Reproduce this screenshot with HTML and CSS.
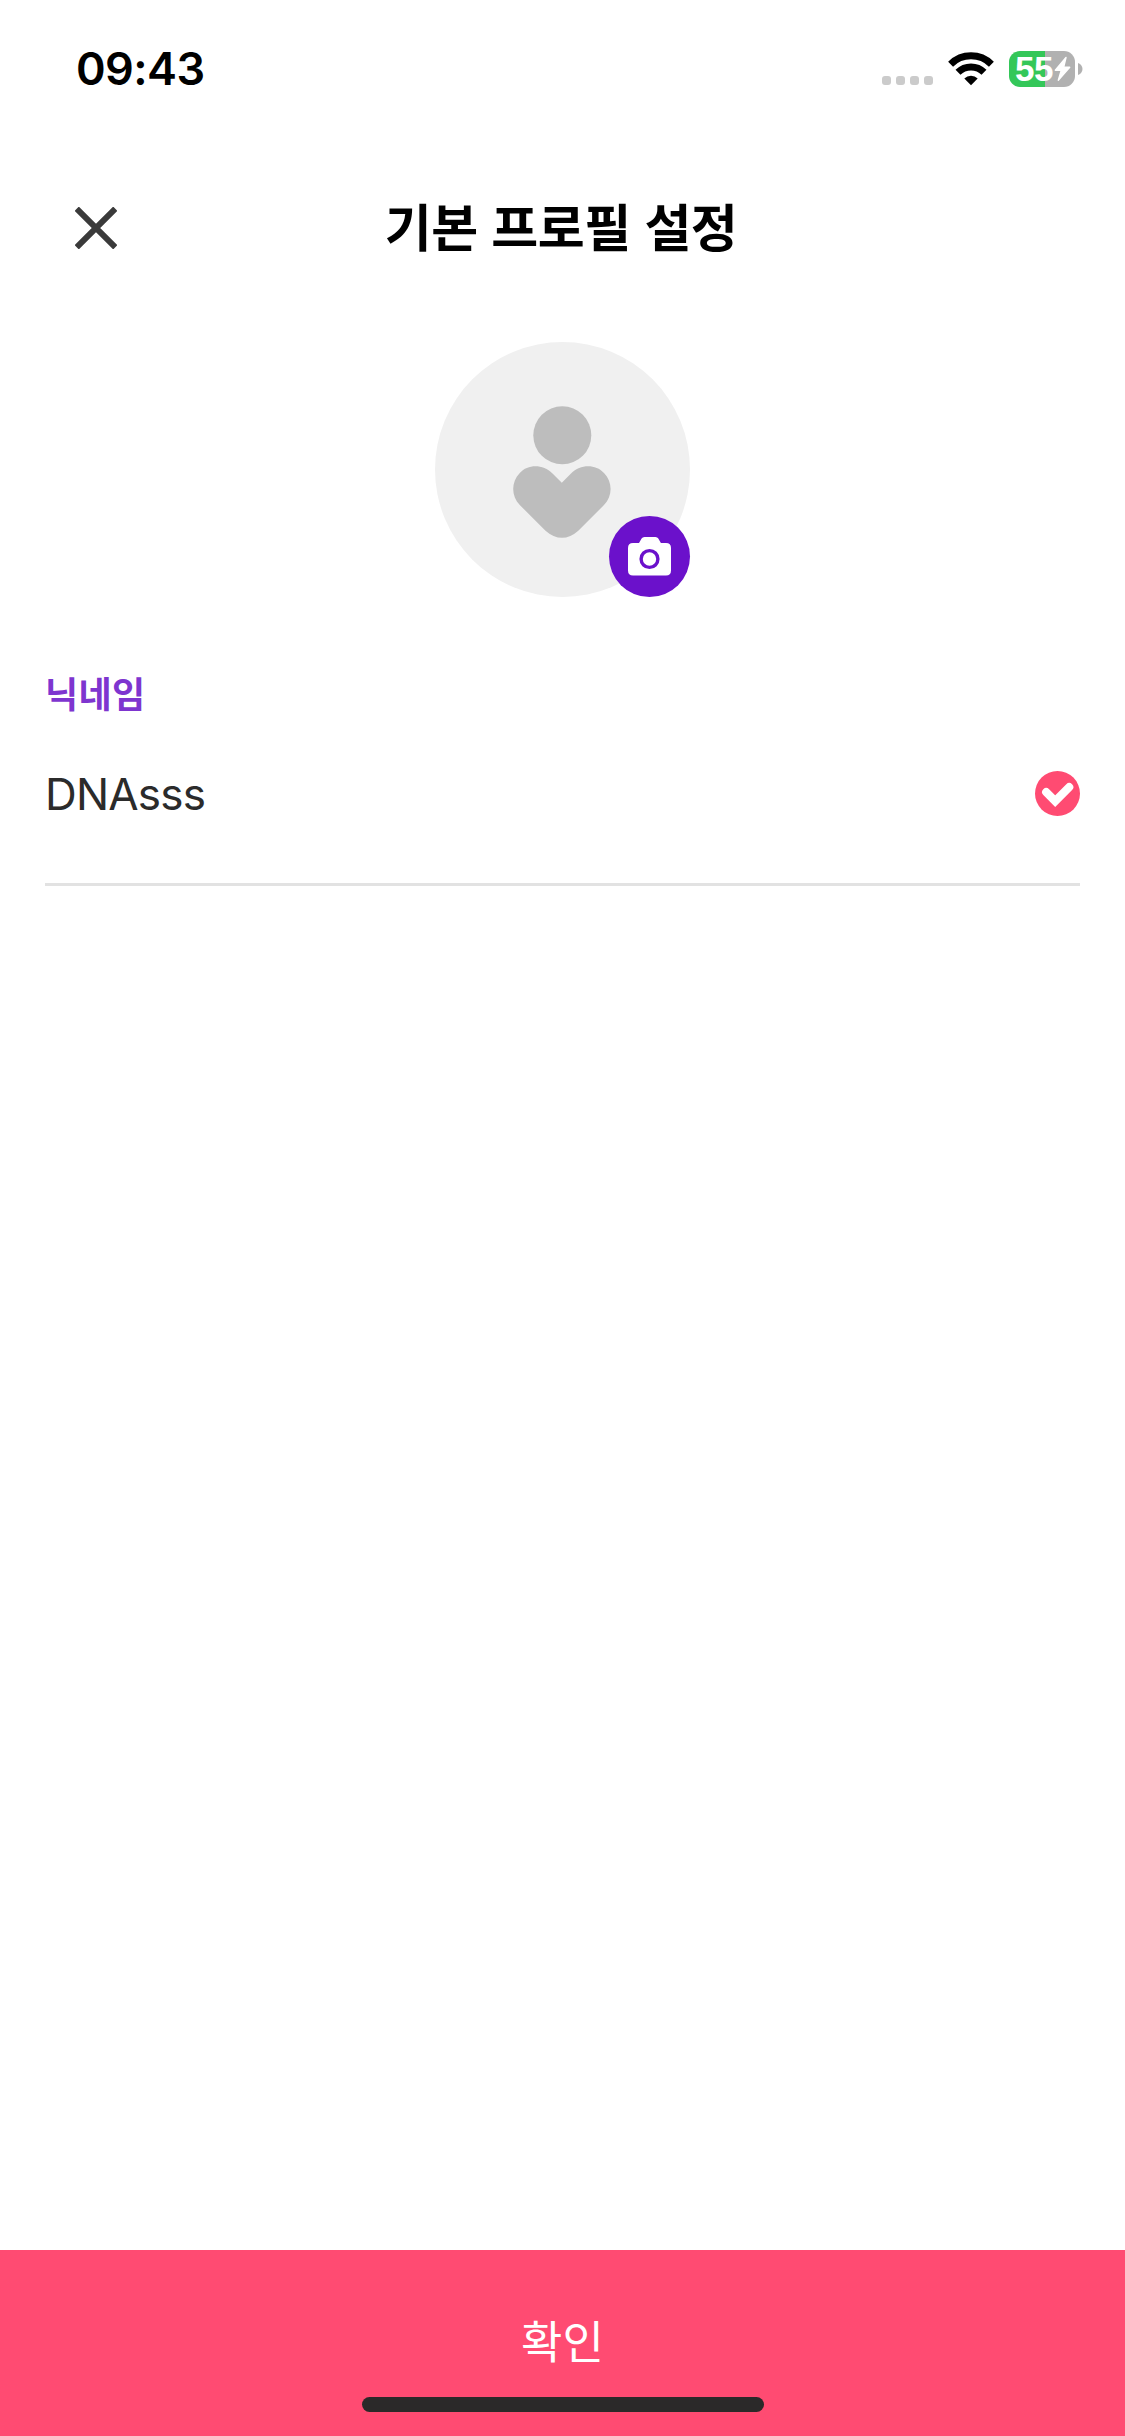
FILE: index.html
```html
<!DOCTYPE html>
<html lang="ko">
<head>
<meta charset="utf-8">
<title>기본 프로필 설정</title>
<link rel="stylesheet" href="styles.css">
</head>
<body>
<main class="screen">
  <div class="status">
    <span class="time">09:43</span>
    <div class="status-icons">
      <svg class="dots" width="51" height="9" viewBox="0 0 51 9"><g fill="#cbcbcb"><rect width="9" height="9" rx="3"/><rect x="14" width="9" height="9" rx="3"/><rect x="28" width="9" height="9" rx="3"/><rect x="42" width="9" height="9" rx="3"/></g></svg>
      <svg class="wifi" width="46" height="34" viewBox="0 0 46 34"><g fill="none" stroke="#000" stroke-width="7"><path d="M2.600 12.200a29 29 0 0 1 40.800 0"/><path d="M10 20.300a18.400 18.400 0 0 1 26 0"/></g><path d="M16.300 26.400a9.600 9.600 0 0 1 13.400 0L23 33.200z"/></svg>
      <div class="battery">
        <div class="cell"><span class="percent">55</span><svg width="17" height="26" viewBox="0 0 17 26"><path d="M12 1.500L1.300 14.300h6L4.300 24.300 15.700 11.200H9.700z" fill="#fff" stroke="#fff" stroke-width="1.400" stroke-linejoin="round"/></svg></div>
        <svg width="5" height="12" viewBox="0 0 5 12"><path d="M0 0C6 2 6 10 0 12z" fill="#b1b1b1"/></svg>
      </div>
    </div>
  </div>
  <header class="bar">
    <button class="close" aria-label="닫기"><svg width="42" height="42" viewBox="0 0 42 42"><path d="M1.700 1.700L40.300 40.300M40.300 1.700L1.700 40.300" stroke="#3a3a3a" stroke-width="6"/></svg></button>
    <h1 class="title">기본 프로필 설정</h1>
  </header>
  <div class="avatar">
    <svg width="255" height="255" viewBox="0 0 255 255"><circle cx="127.500" cy="127.500" r="127.500" fill="#f0f0f0"/><g fill="#bdbdbd"><circle cx="127.300" cy="93.300" r="29"/><path d="M126.800 140.800L117.500 131.500C108 122 93 122 84.800 131C76 140 76 154 84.800 163L110.500 188.700Q127 203 143.300 188.700L169 163C177.800 154 177.800 140 169 131C160.500 122 145.500 122 136 131.500z"/></g></svg>
    <button class="camera" aria-label="사진 변경"><svg width="43" height="39" viewBox="0 0 43 39"><path d="M5 6H11L13.600 1.600Q14.500 0 16.500 0H27.500Q29.400 0 30.300 1.600L32.900 6H38Q43 6 43 11V33.500Q43 38.500 38 38.500H5Q0 38.500 0 33.500V11Q0 6 5 6z" fill="#fff"/><circle cx="21.500" cy="22" r="8.400" fill="none" stroke="#6b11cb" stroke-width="3.400"/></svg></button>
  </div>
  <section class="field">
    <label class="label">닉네임</label>
    <div class="input"><span class="value">DNAsss</span><svg width="45" height="45" viewBox="0 0 45 45"><circle cx="22.500" cy="22.500" r="22.500" fill="#ff4b72"/><path d="M11.200 21.200L20.200 30.200L34.200 16.200" fill="none" stroke="#fff" stroke-width="8.200" stroke-linecap="round"/></svg></div>
  </section>
  <footer class="confirm"><span class="confirm-text">확인</span><div class="home"></div></footer>
</main>
</body>
</html>
```
FILE: styles.css
```css
* { box-sizing: border-box; }
body { margin: 0; background: #fff; font-family: Inter, "Noto Sans CJK KR", sans-serif; }
svg { display: block; flex: none; }
button { border: 0; padding: 0; background: none; }
.screen { width: 1125px; height: 2436px; display: flex; flex-direction: column; background: #fff; }
.status { height: 138px; display: flex; justify-content: space-between; padding: 0 42px 0 76px; }
.time { font-size: 45px; font-weight: 600; line-height: 54px; margin-top: 42px; letter-spacing: -0.6px; }
.status-icons { display: flex; align-items: flex-start; padding-top: 51px; }
.dots { margin: 25px 15px 0 0; }
.wifi { margin: 1px 15px 0 0; }
.battery { display: flex; align-items: center; gap: 3px; }
.cell { width: 66px; height: 36px; border-radius: 11px; background: linear-gradient(90deg, #34c759 36px, #b1b1b1 36px); display: flex; align-items: center; padding-left: 6px; color: #fff; }
.percent { width: 39px; font: 700 35px/36px "Liberation Sans", sans-serif; letter-spacing: -0.5px; }
.bar { height: 180px; display: grid; grid-template-columns: 150px 1fr 150px; align-items: start; }
.close { width: 42px; height: 42px; margin: 69px 0 0 75px; }
.title { margin: 49px 3px 0 0; font: 700 51px/76px "Noto Sans CJK KR", sans-serif; letter-spacing: -0.5px; text-align: center; white-space: nowrap; }
.avatar { position: relative; width: 255px; height: 255px; margin: 24px auto 0; }
.camera { position: absolute; right: 0; bottom: 0; width: 81px; height: 81px; border-radius: 50%; background: #6b11cb; display: flex; justify-content: center; padding-top: 21px; }
.field { margin: 65px 45px 0; display: flex; flex-direction: column; border-bottom: 3px solid #e2e2e2; height: 224px; }
.label { font: 700 36px/60px "Noto Sans CJK KR", sans-serif; letter-spacing: 0.4px; color: #7e35cf; }
.input { height: 60px; margin-top: 41px; display: flex; align-items: center; justify-content: space-between; font-size: 44px; letter-spacing: -0.8px; color: #2b2b2b; }
.value { padding-top: 2px; }
.confirm { margin-top: auto; height: 186px; background: #ff4b72; color: #fff; display: flex; flex-direction: column; align-items: center; }
.confirm-text { font: 400 45px/66px "Noto Sans CJK KR", sans-serif; margin-top: 57px; }
.home { width: 402px; height: 15px; border-radius: 8px; background: #2b2929; margin-top: 24px; }
```
